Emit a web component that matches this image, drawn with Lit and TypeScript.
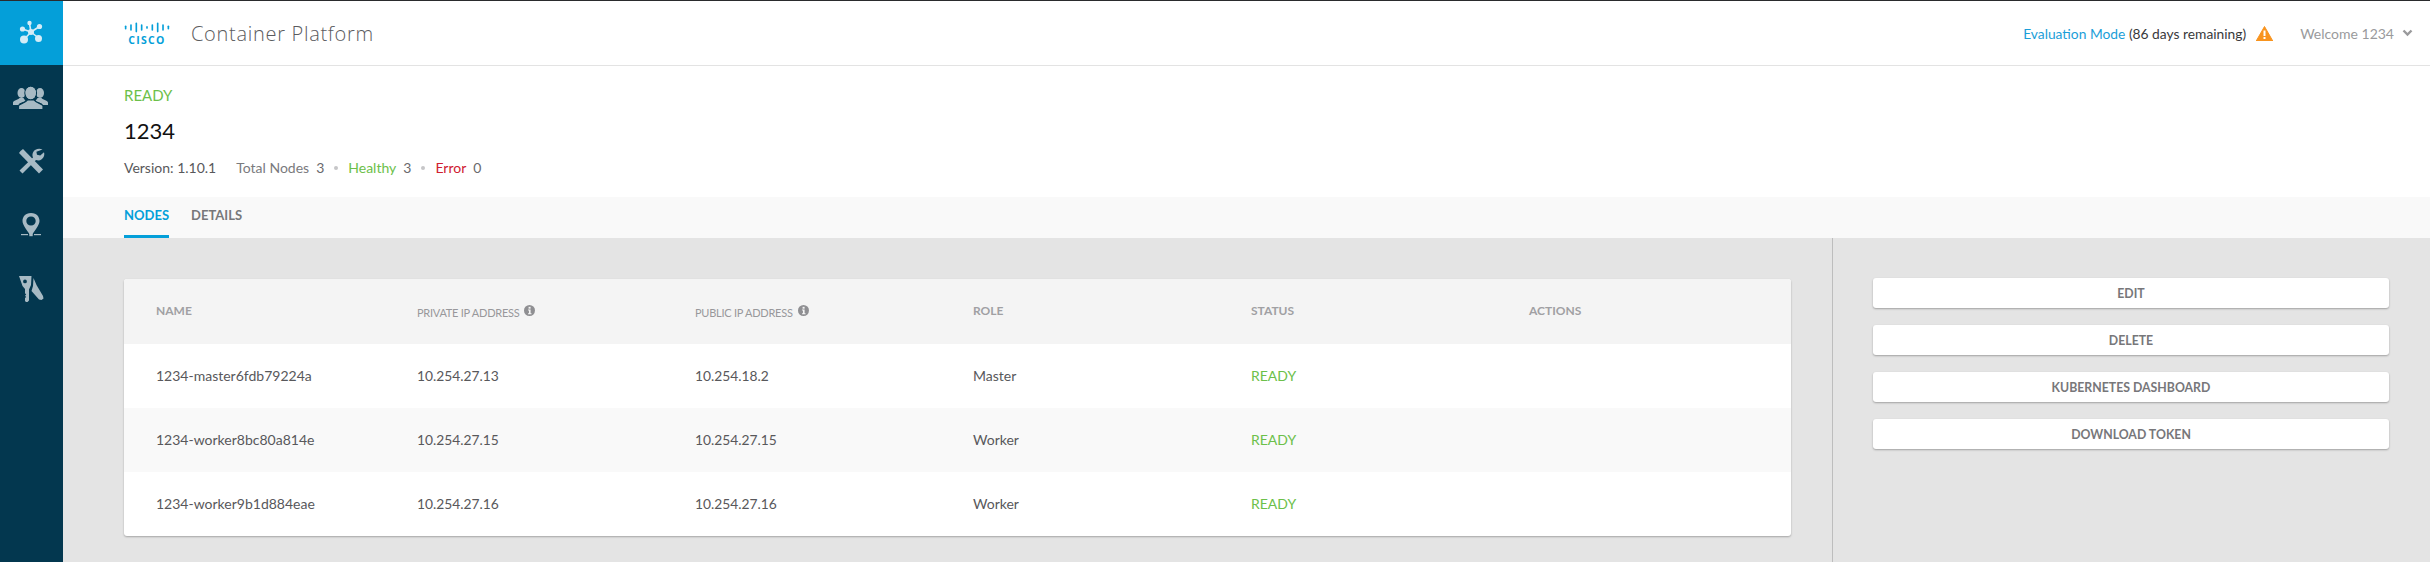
import { LitElement, html, css, svg } from "lit";
import { customElement } from "lit/decorators.js";

const NODES = [
  { name: "1234-master6fdb79224a", priv: "10.254.27.13", pub: "10.254.18.2", role: "Master" },
  { name: "1234-worker8bc80a814e", priv: "10.254.27.15", pub: "10.254.27.15", role: "Worker" },
  { name: "1234-worker9b1d884eae", priv: "10.254.27.16", pub: "10.254.27.16", role: "Worker" },
];
const ACTIONS = ["EDIT", "DELETE", "KUBERNETES DASHBOARD", "DOWNLOAD TOKEN"];
const LOGO_BARS = [
  [1, 5], [7.5, 8], [14, 12], [20.5, 8], [27, 3.5], [33.5, 8], [40, 12], [46.5, 8], [53, 5],
];

const infoIcon = html`<svg class="info" viewBox="0 0 12 12">
  <circle cx="6" cy="6" r="6" fill="#8f8f92"></circle>
  <rect x="5" y="2" width="2.2" height="2" fill="#f4f4f4"></rect>
  <path d="M4.4 5h2.8v4h1v1H4.4V9h1V6h-1z" fill="#f4f4f4"></path>
</svg>`;

const navIcons = [
  svg`<g fill="#d4ecf7" stroke="#d4ecf7">
    <path d="M31 32 29.5 23.5M31 32 39.5 26.5M31 32 38.5 38M31 32 24 39.5M31 32 22.5 29" stroke-width="1.6" fill="none"></path>
    <circle cx="31" cy="32" r="3" stroke="none"></circle>
    <circle cx="29.5" cy="23" r="2.2" stroke="none"></circle>
    <circle cx="39.5" cy="26.5" r="2.6" stroke="none"></circle>
    <circle cx="38.5" cy="38.5" r="3.5" stroke="none"></circle>
    <circle cx="24" cy="39.5" r="4" stroke="none"></circle>
    <circle cx="22.5" cy="29" r="2.6" stroke="none"></circle>
  </g>`,
  svg`<g fill="#a7bac4">
    <ellipse cx="21.500" cy="93" rx="4" ry="5"></ellipse>
    <ellipse cx="40" cy="93" rx="4" ry="5"></ellipse>
    <path d="M13 105v-2.500c0-1.700 5-2.500 6.500-4.500h4l2 3-6 2.500-1 1.500z"></path>
    <path d="M48 105v-2.500c0-1.700-5-2.500-6.500-4.500h-4l-2 3 6 2.500 1 1.500z"></path>
    <g stroke="#03374f" stroke-width="1.200">
      <ellipse cx="30.700" cy="93" rx="5.800" ry="6.800"></ellipse>
      <path d="M18.500 109.600v-3.600c0-2 7-3 9-6h6.500c2 3 9 4 9 6v3.600z"></path>
    </g>
    <ellipse cx="30.700" cy="93" rx="5.200" ry="6.200"></ellipse>
  </g>`,
  svg`<g fill="#a7bac4">
    <path d="M20.500 151 23 149l20 20.500-4 4-20-20.500z"></path>
    <path d="M42.500 149.500c-3.500-1.500-8-.5-9.500 3-.8 1.800-.7 3.500 0 5l-13.500 13 3 3 13.500-13.500c2 .8 4 .6 5.700-.7 2.300-1.700 3.200-4.700 2.300-7l-3.800 3.300-3.200-.8-.6-3z"></path>
  </g>`,
  svg`<g>
    <path fill-rule="evenodd" fill="#a7bac4" d="M31 213c-6 0-8.500 4.200-8.500 8 0 4.500 5.500 10.500 8.500 15 3-4.500 8.500-10.500 8.500-15 0-3.800-2.500-8-8.500-8zm0 3.500c2.800 0 4.700 2 4.700 4.500s-1.900 4.500-4.700 4.500-4.700-2-4.700-4.500 1.900-4.500 4.700-4.500z"></path>
    <rect x="21" y="234" width="7" height="1.200" fill="#a7bac4"></rect>
    <rect x="34" y="234" width="7" height="1.200" fill="#a7bac4"></rect>
    <rect x="29.300" y="233" width="3.400" height="3.200" fill="#a7bac4"></rect>
  </g>`,
  svg`<g fill="#a7bac4">
    <path fill-rule="evenodd" d="M19 276h12.500l-.5 9-2 4.500v11l-1.500 1.500h-1.500l-1-1v-3l1.200-1-1.200-1.200 1.200-1.300-1.200-1.200v-4.300l-2.500-3zm6 3.500a1.900 1.900 0 1 0 0 3.800 1.900 1.900 0 0 0 0-3.800z"></path>
    <path d="M33.500 278l3 7 6.500 11 .5 2.500-2 1.500-2.500-.5-7.500-8.500 1.500-5z"></path>
  </g>`,
];

@customElement("app-root")
export class AppRoot extends LitElement {
  static styles = css`
    :host {
      display: flex;
      width: 2430px;
      height: 562px;
      overflow: hidden;
      box-sizing: border-box;
      border-top: 1px solid #2a2b2d;
      font-family: Lato, "Liberation Sans", sans-serif;
      font-size: 14px;
      color: #58585b;
      background: #fff;
    }
    .sidebar {
      width: 63px;
      flex: none;
      background: #03374f;
      position: relative;
    }
    .sidebar .active {
      height: 64px;
      background: #049fd9;
    }
    .sidebar svg {
      position: absolute;
      left: 0;
      top: -1px;
      width: 63px;
      height: 562px;
    }
    .content {
      flex: 1;
      display: flex;
      flex-direction: column;
      min-width: 0;
    }
    header {
      height: 65px;
      flex: none;
      box-sizing: border-box;
      border-bottom: 1px solid #e3e3e3;
      display: flex;
      align-items: center;
      padding: 0 17px 0 61px;
    }
    .logo {
      width: 46px;
      display: flex;
      flex-direction: column;
      align-items: center;
      color: #049fd9;
    }
    .logo svg {
      width: 46px;
      height: 13px;
      display: block;
    }
    .logo span {
      font: 700 10.5px/11px "Open Sans", sans-serif;
      letter-spacing: 1.3px;
      margin-top: 1px;
    }
    .product {
      margin-left: 21px;
      font: 300 20px "Open Sans", sans-serif;
      color: #5b5b5e;
      letter-spacing: 0.7px;
    }
    .right {
      margin-left: auto;
      display: flex;
      align-items: center;
    }
    .eval {
      color: #39393b;
      font-size: 13.8px;
    }
    .eval a { color: #1b9ed8; }
    .warn { width: 17px; height: 15px; margin: 0 27px 0 10px; }
    .welcome { color: #9a9a9c; }
    .chev { width: 11px; height: 8px; margin-left: 8px; }
    .hero {
      height: 131px;
      flex: none;
      box-sizing: border-box;
      padding: 20px 0 0 61px;
    }
    .state {
      font-size: 15px;
      line-height: 18px;
      color: #6cc04a;
    }
    .title {
      margin-top: 15px;
      font-size: 22px;
      line-height: 24px;
      color: #111;
    }
    .meta {
      margin-top: 16px;
      display: flex;
      align-items: center;
      line-height: 18px;
      font-size: 14px;
    }
    .meta .version { color: #58585b; margin-right: 20px; }
    .meta .label { color: #7a7a7d; margin-right: 7px; }
    .meta .healthy { color: #6cc04a; }
    .meta .error { color: #cf2030; }
    .meta .value { color: #6a6a6d; }
    .dot {
      width: 4px;
      height: 4px;
      border-radius: 50%;
      background: #c6c6c8;
      margin: 0 10px;
    }
    .tabs {
      height: 41px;
      flex: none;
      background: #f9f9f9;
      display: flex;
      gap: 22px;
      padding-left: 61px;
    }
    .tab {
      font-size: 13px;
      font-weight: 700;
      color: #77777a;
      line-height: 37px;
      box-sizing: border-box;
      height: 41px;
    }
    .tab.on {
      color: #049fd9;
      border-bottom: 3px solid #049fd9;
    }
    main {
      flex: 1;
      display: flex;
      background: #e4e4e4;
      min-height: 0;
    }
    .left {
      width: 1770px;
      flex: none;
      box-sizing: border-box;
      padding: 41px 41px 0 61px;
      border-right: 1px solid #bdbdbd;
    }
    .card {
      border-radius: 3px;
      overflow: hidden;
      background: #fff;
      box-shadow: 0 1px 2px rgba(0, 0, 0, 0.28);
    }
    .row {
      display: grid;
      grid-template-columns: 261px repeat(4, 278px) 1fr;
      align-items: center;
      height: 64px;
      padding: 0 0 1px 32px;
      box-sizing: border-box;
      color: #58585b;
    }
    .row.head {
      height: 65px;
      background: #f4f4f4;
      color: #a0a0a3;
      font-size: 12px;
      font-weight: 700;
      padding-bottom: 2px;
    }
    .row.head span.sm {
      font-size: 11px;
      font-weight: 400;
      color: #98989b;
      letter-spacing: -0.25px;
      display: flex;
      align-items: center;
      gap: 5px;
      padding-top: 3px;
    }
    .row:nth-child(odd):not(.head) { background: #f9f9f9; }
    .row .ip { font-size: 13.8px; }
    .row .ready { color: #6cc04a; }
    .info { width: 11px; height: 11px; margin-top: -3px; }
    aside {
      flex: 1;
      padding: 40px 41px 0 40px;
      display: flex;
      flex-direction: column;
      gap: 17px;
    }
    .btn {
      height: 30px;
      background: #fff;
      border-radius: 3px;
      box-shadow: 0 1px 2px rgba(0, 0, 0, 0.3);
      text-align: center;
      font-size: 12.3px;
      font-weight: 700;
      line-height: 31px;
      color: #77777a;
    }
  `;

  render() {
    return html`
      <nav class="sidebar">
        <div class="active"></div>
        <svg viewBox="0 0 63 562">${navIcons}</svg>
      </nav>
      <div class="content">
        <header>
          <div class="logo">
            <svg viewBox="0 0 56 13">
              ${LOGO_BARS.map(([x, h]) => svg`<rect x=${x} y=${(13 - h) / 2} width="2" height=${h} rx="1" fill="#049fd9"></rect>`)}
            </svg>
            <span>CISCO</span>
          </div>
          <div class="product">Container Platform</div>
          <div class="right">
            <span class="eval"><a>Evaluation Mode</a> (86 days remaining)</span>
            <svg class="warn" viewBox="0 0 17 15">
              <path d="M8.500 0.500 16.800 15H.2z" fill="#f8941f" stroke="#f8941f" stroke-linejoin="round"></path>
              <rect x="7.500" y="4.500" width="2" height="5.500" fill="#fff"></rect>
              <rect x="7.500" y="11" width="2" height="2" fill="#fff"></rect>
            </svg>
            <span class="welcome">Welcome 1234</span>
            <svg class="chev" viewBox="0 0 11 8">
              <path d="M1.500 1.500 5.500 5.500 9.500 1.500" fill="none" stroke="#9a9a9c" stroke-width="2.400"></path>
            </svg>
          </div>
        </header>
        <section class="hero">
          <div class="state">READY</div>
          <div class="title">1234</div>
          <div class="meta">
            <span class="version">Version: 1.10.1</span>
            <span class="label">Total Nodes</span><span class="value">3</span>
            <span class="dot"></span>
            <span class="label healthy">Healthy</span><span class="value">3</span>
            <span class="dot"></span>
            <span class="label error">Error</span><span class="value">0</span>
          </div>
        </section>
        <div class="tabs">
          <div class="tab on">NODES</div>
          <div class="tab">DETAILS</div>
        </div>
        <main>
          <div class="left">
            <div class="card">
              <div class="row head">
                <span>NAME</span>
                <span class="sm">PRIVATE IP ADDRESS ${infoIcon}</span>
                <span class="sm">PUBLIC IP ADDRESS ${infoIcon}</span>
                <span>ROLE</span>
                <span>STATUS</span>
                <span>ACTIONS</span>
              </div>
              ${NODES.map(
                (n) => html`
                  <div class="row">
                    <span>${n.name}</span>
                    <span class="ip">${n.priv}</span>
                    <span class="ip">${n.pub}</span>
                    <span>${n.role}</span>
                    <span class="ready">READY</span>
                    <span></span>
                  </div>
                `
              )}
            </div>
          </div>
          <aside>
            ${ACTIONS.map((a) => html`<div class="btn">${a}</div>`)}
          </aside>
        </main>
      </div>
    `;
  }
}
